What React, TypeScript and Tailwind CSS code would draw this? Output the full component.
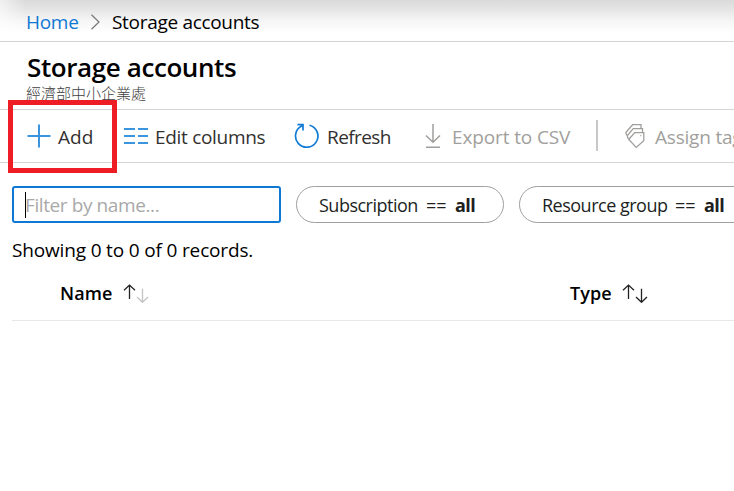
import type { ReactNode } from 'react';

function Cell({ className, children }: { className: string; children: ReactNode }) {
  return <span className={`block shrink-0 whitespace-pre ${className}`}>{children}</span>;
}

function SortArrows({ down }: { down: string }) {
  return (
    <svg className="block shrink-0" width="26" height="20" viewBox="0 0 26 20" fill="none" strokeWidth="1.3">
      <path d="M6.5 16V2.2M1 7.3L6.5 2.1L12 7.3" stroke="#222" />
      <path d="M19.5 5.8V19.3M14 14L19.5 19.3L25 14" stroke={down} />
    </svg>
  );
}

export default function App() {
  return (
    <div className="flex h-[491px] w-[734px] flex-col overflow-hidden bg-white font-['Open_Sans','Noto_Sans_CJK_TC',sans-serif] text-[19px] leading-7 text-black">
      <nav className="flex h-[42px] shrink-0 items-center border-b border-[#d4d4d4] bg-[linear-gradient(to_right,rgba(255,255,255,0.6),rgba(255,255,255,0)_26px),linear-gradient(to_bottom,#dadada,#e6e6e6_25%,#f5f5f5_50%,#fff_80%)] pl-[26px] pt-[3px]">
        <Cell className="w-[65px] tracking-[-0.3px] text-[#0f78d4]">Home</Cell>
        <svg className="block shrink-0" width="9" height="16" viewBox="0 0 9 16" fill="none" stroke="#777" strokeWidth="1.2">
          <path d="M.5 .8L8 8L.5 15.2" />
        </svg>
        <Cell className="ml-[12px] tracking-[-0.31px]">Storage accounts</Cell>
      </nav>

      <header className="flex h-[68px] shrink-0 flex-col border-b border-[#d4d4d4] pl-[26px]">
        <h1 className="mt-[10px] h-[30px] whitespace-pre pl-px text-[26px] font-semibold leading-[30px] tracking-[-0.4px]">Storage accounts</h1>
        <p className="mt-[3px] h-4 whitespace-pre text-[15px] font-light leading-4 text-[#404040]">經濟部中小企業處</p>
      </header>

      <div className="relative flex h-[53px] shrink-0 items-center border-b border-[#d4d4d4] pl-[27px] text-[#323130]">
        <div className="pointer-events-none absolute -top-[10px] left-2 h-[73px] w-[109px] border-5 border-[#ee1c25]" />
        <svg className="block shrink-0" width="24" height="24" viewBox="0 0 24 24" fill="none" stroke="#3a94de" strokeWidth="2">
          <path d="M12 .5V23.5M.5 12H23.5" />
        </svg>
        <Cell className="ml-[7px] w-[66px] pt-px">Add</Cell>
        <svg className="block shrink-0" width="24" height="16" viewBox="0 0 24 16" fill="none" stroke="#3a94de" strokeWidth="2">
          <path d="M0 1H11M14 1H24M0 8H11M14 8H24M0 15H11M14 15H24" />
        </svg>
        <Cell className="ml-[7px] w-[139px] pt-px tracking-[-0.3px]">Edit columns</Cell>
        <svg className="block shrink-0" width="26" height="26" viewBox="0 0 26 26" fill="none" stroke="#0f7bd6" strokeWidth="1.7">
          <path d="M15.5 2.2A11.2 11.2 0 1 1 8.2 2.8M3.5 1.7H9V7.5" />
        </svg>
        <Cell className="ml-[7px] w-[98px] pt-px tracking-[-0.6px]">Refresh</Cell>
        <svg className="block shrink-0" width="16" height="26" viewBox="0 0 16 26" fill="none" stroke="#a19f9d" strokeWidth="1.5">
          <path d="M8 1V19M1 12.5L8 19.3L15 12.5M1 24.3H15" />
        </svg>
        <Cell className="ml-[11px] w-[144px] pt-px tracking-[-0.12px] text-[#a19f9d]">Export to CSV</Cell>
        <span className="mb-px h-[31px] w-[2px] shrink-0 bg-[#c8c8c8]" />
        <svg className="ml-[27px] block shrink-0" width="20" height="26" viewBox="0 0 20 26" fill="none" stroke="#a19f9d" strokeWidth="1.3">
          <path d="M4.3 15.7L9.8 9.6H18.8V17.7L11.2 24.4L4.3 17Z" />
          <path d="M4.3 16.8L2.5 14.3V12.5L8.2 5.7H17.5V9.6" />
          <path d="M2.5 12.8L1 10.8V9.2L7.6 1.7H16V5.7" />
          <path d="M15.3 12.6H16.3" />
        </svg>
        <Cell className="ml-[10px] pt-px tracking-[-0.2px] text-[#a19f9d]">Assign tags</Cell>
      </div>

      <div className="mt-[23px] flex h-[37px] shrink-0 items-center pl-3">
        <div className="flex h-[37px] w-[269px] shrink-0 items-center rounded-[3px] border-2 border-[#0f78d4] pl-[11px]">
          <span className="h-[26px] w-px bg-black" />
          <Cell className="-ml-px tracking-[-0.4px] text-[#a9a9a9]">Filter by name...</Cell>
        </div>
        <div className="ml-[15px] flex h-[37px] w-[208px] shrink-0 items-center rounded-full border border-[#a19f9d] pl-[22px] text-[18px] text-[#201f1e]">
          <Cell className="w-[107px] tracking-[-0.5px]">Subscription</Cell>
          <Cell className="w-[29px]">==</Cell>
          <Cell className="font-bold tracking-[-0.5px]">all</Cell>
        </div>
        <div className="ml-[15px] flex h-[37px] w-[240px] shrink-0 items-center rounded-full border border-[#a19f9d] pl-[22px] text-[18px] text-[#201f1e]">
          <Cell className="w-[133px] tracking-[-0.5px]">Resource group</Cell>
          <Cell className="w-[29px]">==</Cell>
          <Cell className="font-bold tracking-[-0.5px]">all</Cell>
        </div>
      </div>

      <p className="mt-[13px] h-7 shrink-0 whitespace-pre pl-3 tracking-[-0.16px]">Showing 0 to 0 of 0 records.</p>

      <div className="ml-3 flex h-[57px] shrink-0 items-center border-b border-[#e8e8e8] pl-[48px] pt-[2px] text-[18px] font-semibold">
        <Cell className="w-[63px] tracking-[0.1px]">Name</Cell>
        <SortArrows down="#c4c4c4" />
        <Cell className="ml-[421px] w-[52px] tracking-[0.1px]">Type</Cell>
        <SortArrows down="#222" />
      </div>
    </div>
  );
}
